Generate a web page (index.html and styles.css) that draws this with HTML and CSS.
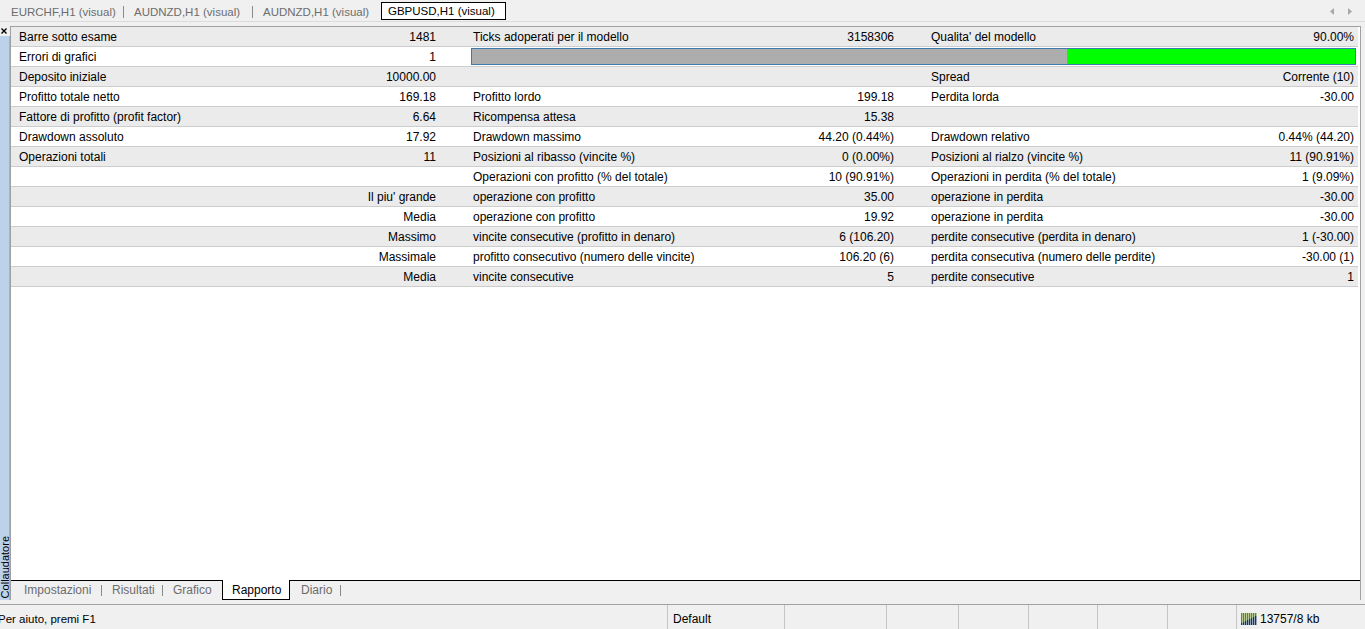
FILE: index.html
```html
<!DOCTYPE html>
<html lang="it">
<head>
  <meta charset="UTF-8" />
  <title>Collaudatore – Rapporto</title>
  <link rel="stylesheet" href="styles.css">
</head>
<body>
  <div class="chart-tabs">
    <span class="ctab t1">EURCHF,H1 (visual)</span>
    <span class="ctab t2">AUDNZD,H1 (visual)</span>
    <span class="ctab t3">AUDNZD,H1 (visual)</span>
    <span class="ctab active">GBPUSD,H1 (visual)</span>
    <span class="scroll">
      <svg width="4" height="7" viewBox="0 0 4 7"><path d="M4 0 L0 3.5 L4 7 Z" fill="#a8a8a8"/></svg>
      <svg width="4" height="7" viewBox="0 0 4 7"><path d="M0 0 L4 3.5 L0 7 Z" fill="#a8a8a8"/></svg>
    </span>
  </div>

  <div class="terminal">
    <div class="side">
      <svg class="close" width="6" height="6" viewBox="0 0 6 6">
        <path d="M0.5 0.5 L5.5 5.5 M5.5 0.5 L0.5 5.5" stroke="#000" stroke-width="1.4"/>
      </svg>
      <div class="side-strip"><span class="side-title">Collaudatore</span></div>
    </div>

    <div class="pane">
      <div class="report">
        <table class="stats">
          <colgroup>
            <col style="width:289px"><col style="width:170px">
            <col style="width:290px"><col style="width:168px">
            <col style="width:232px"><col style="width:198px">
          </colgroup>
          <tbody>
            <tr><td>Barre sotto esame</td><td>1481</td><td>Ticks adoperati per il modello</td><td>3158306</td><td>Qualita' del modello</td><td>90.00%</td></tr>
            <tr><td>Errori di grafici</td><td>1</td>
              <td class="bar-cell" colspan="4">
                <div class="quality"><div class="q-rest"></div><div class="q-fill" style="width:32.6%"></div></div>
              </td></tr>
            <tr><td>Deposito iniziale</td><td>10000.00</td><td></td><td></td><td>Spread</td><td>Corrente (10)</td></tr>
            <tr><td>Profitto totale netto</td><td>169.18</td><td>Profitto lordo</td><td>199.18</td><td>Perdita lorda</td><td>-30.00</td></tr>
            <tr><td>Fattore di profitto (profit factor)</td><td>6.64</td><td>Ricompensa attesa</td><td>15.38</td><td></td><td></td></tr>
            <tr><td>Drawdown assoluto</td><td>17.92</td><td>Drawdown massimo</td><td>44.20 (0.44%)</td><td>Drawdown relativo</td><td>0.44% (44.20)</td></tr>
            <tr><td>Operazioni totali</td><td>11</td><td>Posizioni al ribasso (vincite %)</td><td>0 (0.00%)</td><td>Posizioni al rialzo (vincite %)</td><td>11 (90.91%)</td></tr>
            <tr><td></td><td></td><td>Operazioni con profitto (% del totale)</td><td>10 (90.91%)</td><td>Operazioni in perdita (% del totale)</td><td>1 (9.09%)</td></tr>
            <tr><td></td><td>Il piu' grande</td><td>operazione con profitto</td><td>35.00</td><td>operazione in perdita</td><td>-30.00</td></tr>
            <tr><td></td><td>Media</td><td>operazione con profitto</td><td>19.92</td><td>operazione in perdita</td><td>-30.00</td></tr>
            <tr><td></td><td>Massimo</td><td>vincite consecutive (profitto in denaro)</td><td>6 (106.20)</td><td>perdite consecutive (perdita in denaro)</td><td>1 (-30.00)</td></tr>
            <tr><td></td><td>Massimale</td><td>profitto consecutivo (numero delle vincite)</td><td>106.20 (6)</td><td>perdita consecutiva (numero delle perdite)</td><td>-30.00 (1)</td></tr>
            <tr><td></td><td>Media</td><td>vincite consecutive</td><td>5</td><td>perdite consecutive</td><td>1</td></tr>
          </tbody>
        </table>
      </div>

      <div class="pane-tabs">
        <span class="ptab p1 sep">Impostazioni</span>
        <span class="ptab p2 sep">Risultati</span>
        <span class="ptab p3">Grafico</span>
        <span class="ptab p4 active">Rapporto</span>
        <span class="ptab p5 sep">Diario</span>
      </div>
    </div>
  </div>

  <div class="statusbar">
    <span class="cell s1">Per aiuto, premi F1</span>
    <span class="cell s2">Default</span>
    <span class="cell s3"></span>
    <span class="cell s4"></span>
    <span class="cell s5"></span>
    <span class="cell s6"></span>
    <span class="cell s7"></span>
    <span class="cell s8"></span>
    <span class="cell s9">
      <svg class="mem" width="16" height="12" viewBox="0 0 16 12">
        <g fill="#5f8c0a">
          <rect x="0" y="0" width="1.4" height="10"/><rect x="2" y="0" width="1.4" height="9"/>
          <rect x="4" y="0" width="1.4" height="8"/><rect x="6" y="0" width="1.4" height="7"/>
          <rect x="8" y="0" width="1.4" height="6"/><rect x="10" y="0" width="1.4" height="5"/>
          <rect x="12" y="0" width="1.4" height="4"/><rect x="14" y="0" width="1.4" height="3"/>
        </g>
        <g fill="#0f3766">
          <rect x="0" y="10" width="1.4" height="2"/><rect x="2" y="9" width="1.4" height="3"/>
          <rect x="4" y="8" width="1.4" height="4"/><rect x="6" y="7" width="1.4" height="5"/>
          <rect x="8" y="6" width="1.4" height="6"/><rect x="10" y="5" width="1.4" height="7"/>
          <rect x="12" y="4" width="1.4" height="8"/><rect x="14" y="3" width="1.4" height="9"/>
        </g>
      </svg>
      13757/8 kb
    </span>
  </div>
</body>
</html>
```

FILE: styles.css
```css
body {
  margin: 0;
  width: 1365px;
  height: 629px;
  overflow: hidden;
  font-family: "Liberation Sans", Arial, sans-serif;
  font-size: 12px;
  color: #000;
  background: #f0f0f0;
}

/* chart window tabs */
.chart-tabs {
  height: 21px;
  display: flex;
  border-bottom: 1px solid #dcdcdc;
  font-size: 11.5px;
}

.ctab {
  position: relative;
  line-height: 24px;
  color: #6d6d6d;
  white-space: nowrap;
  box-sizing: border-box;
}

.ctab.t1 { width: 124px; padding-left: 11px; }
.ctab.t2 { width: 129px; padding-left: 10px; }
.ctab.t3 { width: 127px; padding-left: 10px; }

.ctab.t1::after,
.ctab.t2::after {
  content: "";
  position: absolute;
  right: 0;
  top: 6px;
  width: 1px;
  height: 12px;
  background: #8a8a8a;
}

.ctab.active {
  width: 125px;
  padding-left: 6px;
  margin: 2px 0 0 1px;
  height: 18px;
  line-height: 17px;
  color: #000;
  background: #fff;
  border: 1px solid #000;
}

.scroll {
  margin-left: auto;
  display: flex;
  gap: 14px;
  align-items: center;
  padding: 2px 13px 0 0;
}

/* terminal window */
.terminal {
  height: 582px;
  display: flex;
}

.side {
  width: 10px;
  display: flex;
  flex-direction: column;
}

.close {
  margin: 6px 0 0 1px;
}

.side-strip {
  flex: 1;
  margin-top: 2px;
  margin-bottom: 4px;
  background: #bcd1ea;
  border-right: 1px solid #9db5d2;
  display: flex;
  flex-direction: column;
  justify-content: flex-end;
  overflow: hidden;
}

.side-title {
  writing-mode: vertical-rl;
  transform: rotate(180deg);
  font-size: 11px;
  line-height: 10px;
  padding-top: 2px;
  white-space: nowrap;
}

.pane {
  width: 1349px;
  margin: 4px 4px 4px 0;
  border: 1px solid #a0a0a0;
  border-bottom: none;
  background: #fff;
  display: flex;
  flex-direction: column;
}

.report {
  flex: 1;
}

/* report table */
.stats {
  width: 1347px;
  table-layout: fixed;
  border-collapse: collapse;
}

.stats td {
  height: 17px;
  padding: 2px 0 0 0;
  line-height: 17px;
  border-bottom: 1px solid #cdcdcd;
  white-space: nowrap;
  overflow: hidden;
}

.stats tr:nth-child(odd) td {
  background: #ebebeb;
}

.stats td:nth-child(1) { padding-left: 8px; }
.stats td:nth-child(2) { text-align: right; padding-right: 34px; }
.stats td:nth-child(3) { padding-left: 3px; }
.stats td:nth-child(4) { text-align: right; padding-right: 34px; }
.stats td:nth-child(5) { padding-left: 3px; }
.stats td:nth-child(6) { text-align: right; padding-right: 4px; }

.stats td.bar-cell {
  height: 19px;
  padding: 0;
}

.quality {
  height: 17px;
  margin: 1px 2px 1px 1px;
  box-sizing: border-box;
  border: 1px solid #3d7ab0;
  display: flex;
}

.q-rest {
  flex: 1;
  background: #adadad;
}

.q-fill {
  background: #00ff00;
}

/* bottom tabs of the terminal */
.pane-tabs {
  height: 19px;
  border-top: 1px solid #000;
  background: #f0f0f0;
  display: flex;
}

.ptab {
  position: relative;
  box-sizing: border-box;
  line-height: 19px;
  color: #6d6d6d;
  white-space: nowrap;
}

.ptab.sep::after {
  content: "";
  position: absolute;
  right: 0;
  top: 4px;
  width: 1px;
  height: 11px;
  background: #8a8a8a;
}

.ptab.p1 { width: 91px; padding-left: 13px; }
.ptab.p2 { width: 61px; padding-left: 10px; }
.ptab.p3 { width: 59px; padding-left: 10px; }
.ptab.p5 { width: 51px; padding-left: 11px; }

.ptab.active {
  width: 68px;
  padding-left: 9px;
  margin-top: -1px;
  height: 20px;
  line-height: 20px;
  color: #000;
  background: #fff;
  border: 1px solid #000;
  border-top: none;
}

/* status bar */
.statusbar {
  height: 24px;
  border-top: 1px solid #a0a0a0;
  display: flex;
  font-size: 12px;
}

.statusbar .cell {
  box-sizing: border-box;
  height: 24px;
  padding-top: 3px;
  border-left: 1px solid #c4c4c4;
  padding-left: 5px;
  white-space: nowrap;
  display: flex;
  align-items: center;
}

.statusbar .s1 { width: 667px; border-left: none; padding-left: 0; font-size: 11.5px; text-indent: -2px; }
.statusbar .s2 { width: 117px; }
.statusbar .s3 { width: 102px; }
.statusbar .s4 { width: 72px; }
.statusbar .s5 { width: 70px; }
.statusbar .s6 { width: 69px; }
.statusbar .s7 { width: 70px; }
.statusbar .s8 { width: 69px; }
.statusbar .s9 { flex: 1; gap: 3px; padding-left: 4px; }
```
